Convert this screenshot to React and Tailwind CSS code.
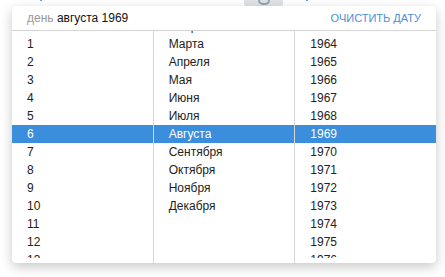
import React from "react";

const days = Array.from({ length: 13 }, (_, i) => String(i + 1));
const months = ["Февраля", "Марта", "Апреля", "Мая", "Июня", "Июля", "Августа", "Сентября", "Октября", "Ноября", "Декабря"];
const years = Array.from({ length: 14 }, (_, i) => String(1963 + i));

function Col({ items, selected, lead, border }) {
  return (
    <div className={`flex-1 min-h-0 flex flex-col pb-[5px] ${border ? "border-r border-[#d4d4d4]" : ""}`}>
      <div className="flex-1 min-h-0 overflow-hidden">
        <div className="-mt-[14px] flex flex-col">
          {lead && <div className="h-[18px]" />}
          {items.map((t) => (
            <div
              key={t}
              className={`h-[18px] leading-[18px] pl-[15px] text-[12px] ${
                t === selected ? "bg-[#3a8edb] text-white" : "text-[#222]"
              }`}
            >
              {t}
            </div>
          ))}
        </div>
      </div>
    </div>
  );
}

export default function App() {
  return (
    <div
      className="relative w-[445px] h-[277px] bg-white overflow-hidden"
      style={{ fontFamily: '"Liberation Sans", Arial, sans-serif' }}
    >
      <div className="absolute left-[244px] top-0 w-[39px] h-[6px] bg-[#dfe3e8] rounded-b-[2px] flex justify-center">
        <div className="w-[12px] h-[10px] -mt-[5px] rounded-full border-2 border-[#9aa3ad] border-t-transparent" />
      </div>
      <div className="absolute left-[40px] top-0 w-[2px] h-[1px] bg-[#5aa7e6]" />
      <div className="absolute left-[306px] top-0 w-[2px] h-[1px] bg-[#5aa7e6]" />
      <div className="relative ml-[12px] mt-[6px] w-[424px] h-[257px] bg-white rounded-[4px] shadow-[0_4px_12px_rgba(0,0,0,0.22)] flex flex-col overflow-hidden">
        <div className="shrink-0 h-[25px] border-b border-[#d4d4d4] flex items-center justify-between px-[15px]">
          <div className="text-[12px]">
            <span className="text-[#999]">день</span>{" "}
            <span className="text-[#111]">августа 1969</span>
          </div>
          <div className="text-[11px] text-[#4a90d9]">ОЧИСТИТЬ ДАТУ</div>
        </div>
        <div className="flex-1 min-h-0 flex">
          <Col items={days} selected="6" lead border />
          <Col items={months} selected="Августа" border />
          <Col items={years} selected="1969" />
        </div>
      </div>
    </div>
  );
}
